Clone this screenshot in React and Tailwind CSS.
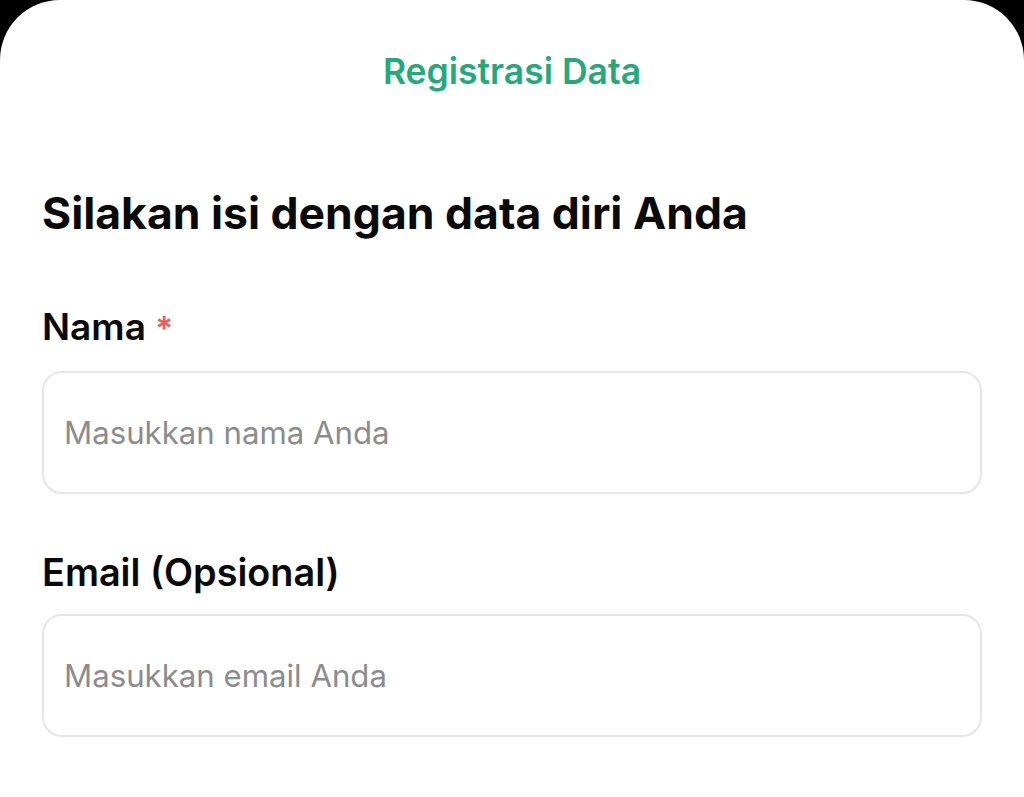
export default function App() {
  return (
    <div className="min-h-screen bg-black" style={{ fontFamily: "Inter, 'Noto Sans', sans-serif" }}>
      <div className="min-h-[797px] bg-white rounded-t-[60px] px-[42px]">
        <h1 className="pt-[50px] text-center text-[35.5px] font-semibold text-[#25a97b] leading-[44px]">
          Registrasi Data
        </h1>

        <h2 className="mt-[94px] text-[44.5px] font-bold text-[#0a0a0a] leading-[50px]">
          Silakan isi dengan data diri Anda
        </h2>

        <div className="mt-[67px]">
          <label className="block text-[37px] font-semibold text-[#0a0a0a] leading-[44px]">
            Nama <span className="text-[33px] text-[#f05a5a]">*</span>
          </label>
          <input
            type="text"
            placeholder="Masukkan nama Anda"
            className="mt-[21px] w-full h-[123px] rounded-[20px] border-2 border-[#e6e6e6] px-[20px] text-[31.2px] outline-none placeholder:text-[#8c8c8c]"
          />
        </div>

        <div className="mt-[56px]">
          <label className="block text-[37.8px] font-semibold text-[#0a0a0a] leading-[44px]">
            Email (Opsional)
          </label>
          <input
            type="text"
            placeholder="Masukkan email Anda"
            className="mt-[20px] w-full h-[123px] rounded-[20px] border-2 border-[#e6e6e6] px-[20px] text-[31.2px] outline-none placeholder:text-[#8c8c8c]"
          />
        </div>
      </div>
    </div>
  );
}
